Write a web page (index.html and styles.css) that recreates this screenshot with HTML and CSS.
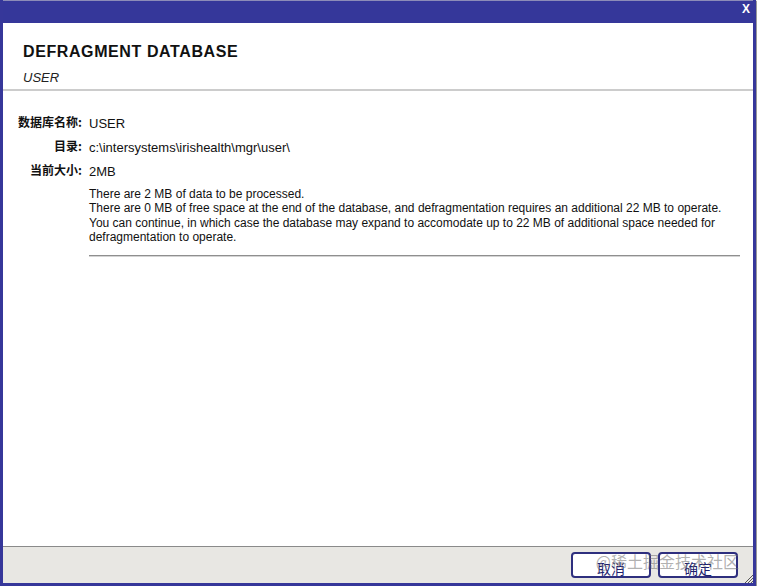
FILE: index.html
```html
<!DOCTYPE html>
<html lang="zh">
<head>
<meta charset="utf-8">
<title>Defragment Database</title>
<link rel="stylesheet" href="styles.css">
</head>
<body>
<div class="window">
  <div class="titlebar">
    <span class="close">X</span>
  </div>
  <div class="content">
    <div class="header">
      <div class="title">DEFRAGMENT DATABASE</div>
      <div class="subtitle">USER</div>
    </div>
    <div class="form">
      <div class="label">数据库名称:</div>
      <div class="value">USER</div>
      <div class="label">目录:</div>
      <div class="value">c:\intersystems\irishealth\mgr\user\</div>
      <div class="label">当前大小:</div>
      <div class="value">
        <div>2MB</div>
        <p class="desc">There are 2 MB of data to be processed.<br>There are 0 MB of free space at the end of the database, and defragmentation requires an additional 22 MB to operate.<br>You can continue, in which case the database may expand to accomodate up to 22 MB of additional space needed for defragmentation to operate.</p>
        <div class="rule"></div>
      </div>
    </div>
  </div>
  <div class="footer">
    <button class="btn">取消</button>
    <button class="btn">确定</button>
    <span class="watermark">@稀土掘金技术社区</span>
    <svg class="grip" width="9" height="9" viewBox="0 0 9 9">
      <path d="M1 9 L9 1 M4 9 L9 4 M7 9 L9 7" stroke="#555" stroke-width="1" fill="none"/>
    </svg>
  </div>
</div>
</body>
</html>
```

FILE: styles.css
```css
html, body {
  margin: 0;
  padding: 0;
  background: #ffffff;
}

body {
  font-family: "Liberation Sans", Arial, "Noto Sans CJK SC", sans-serif;
  color: #000;
}

.window {
  width: 756px;
  height: 586px;
  box-sizing: border-box;
  border: 3px solid #36379a;
  border-top: 0;
  display: flex;
  flex-direction: column;
  box-shadow: 1px 1px 1px #9a9a9a;
}

.titlebar {
  height: 23px;
  flex: none;
  background: #35379a;
  border-top: 1px solid #8c8cb8;
  box-sizing: border-box;
  display: flex;
  justify-content: flex-end;
  align-items: flex-start;
  padding-right: 3px;
}

.close {
  color: #ffffff;
  font: bold 12px/14px "Liberation Sans", Arial, sans-serif;
  margin-top: 1px;
}

.content {
  flex: 1;
  background: #ffffff;
  display: flex;
  flex-direction: column;
}

.header {
  padding: 20px 20px 3px 20px;
  border-bottom: 2px solid #cccccc;
}

.title {
  font-size: 16px;
  line-height: 18px;
  font-weight: bold;
  letter-spacing: 0.6px;
  color: #111;
}

.subtitle {
  margin-top: 9px;
  font-size: 13px;
  line-height: 16px;
  font-style: italic;
  color: #222;
}

.form {
  display: grid;
  grid-template-columns: 79px 1fr;
  column-gap: 7px;
  row-gap: 8px;
  padding: 25px 13px 0 0;
}

.label {
  text-align: right;
  font-family: "Noto Sans CJK SC", "Liberation Sans", sans-serif;
  font-weight: bold;
  font-size: 12px;
  line-height: 12px;
  color: #111;
}

.value {
  font-size: 13px;
  line-height: 16px;
  color: #111;
}

.desc {
  margin: 7px 0 0 0;
  font-size: 12px;
  line-height: 14.4px;
  color: #111;
}

.rule {
  margin-top: 10px;
  border-top: 1px solid #8f8f8f;
  border-bottom: 1px solid #d4d4d4;
}

.footer {
  flex: none;
  height: 37px;
  box-sizing: border-box;
  border-top: 1px solid #8a8a8a;
  background: #e8e7e3;
  display: flex;
  justify-content: flex-end;
  align-items: flex-start;
  gap: 7px;
  padding: 5px 15px 0 0;
  position: relative;
}

.btn {
  width: 80px;
  height: 26px;
  box-sizing: border-box;
  border: 2px solid #2e2f7e;
  border-radius: 4px;
  background: #ffffff;
  color: #1d1f6e;
  font-family: "Noto Sans CJK SC", sans-serif;
  font-size: 14px;
  line-height: 20px;
  padding: 0;
  padding-top: 4px;
}

.watermark {
  position: absolute;
  right: 14px;
  top: 3px;
  font-family: "Noto Sans CJK SC", sans-serif;
  font-size: 16px;
  line-height: 22px;
  color: rgba(110, 110, 110, 0.55);
  pointer-events: none;
}

.grip {
  position: absolute;
  right: 0;
  bottom: 0;
}
```
